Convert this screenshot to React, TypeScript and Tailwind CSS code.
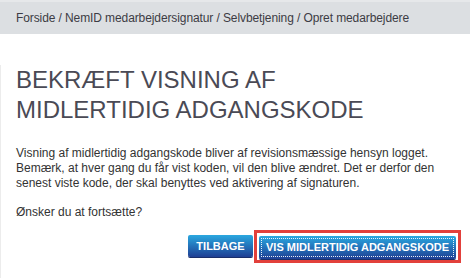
import React from "react";

export default function App() {
  return (
    <div className="w-[470px] h-[278px] bg-white overflow-hidden font-['Liberation_Sans',Arial,sans-serif]">
      <div className="h-[34px] bg-[#dcdfe2] border-t-2 border-[#e6e8ea] flex items-center pl-4 text-[12px] tracking-[-0.1px] text-[#3c3c44]">
        Forside / NemID medarbejdersignatur / Selvbetjening / Opret medarbejdere
      </div>
      <div className="border-l border-[#ececec] h-[244px] pl-[15px] pr-[9px]">
        <h1 className="mt-[31px] text-[24px] leading-[30px] text-[#4a4a55] font-normal">
          BEKRÆFT VISNING AF
          <br />
          MIDLERTIDIG ADGANGSKODE
        </h1>
        <p className="mt-[21px] text-[12px] leading-[15px] text-[#333] pr-[10px]">
          Visning af midlertidig adgangskode bliver af revisionsmæssige hensyn logget. Bemærk, at hver gang du får vist koden, vil den blive ændret. Det er derfor den senest viste kode, der skal benyttes ved aktivering af signaturen.
        </p>
        <p className="mt-[14px] text-[12px] leading-[15px] text-[#333]">Ønsker du at fortsætte?</p>
        <div className="mt-[10px] flex justify-end items-center gap-px">
          <button className="w-[65px] h-[22px] rounded-[2px] bg-linear-to-b from-[#2aa8e0] to-[#1f3f94] text-white font-bold text-[11px] shadow-[0_1px_0_#1a2f6a]">
            TILBAGE
          </button>
          <div className="border-[3px] border-[#e2403b] px-[2px] py-px">
            <button className="relative w-[197px] h-[23px] rounded-[2px] bg-linear-to-b from-[#2aa8e0] to-[#1f3f94] text-white font-bold text-[11px] shadow-[0_1px_0_#1a2f6a]">
              <span className="absolute inset-[2px] border border-dotted border-white/90"></span>
              VIS MIDLERTIDIG ADGANGSKODE
            </button>
          </div>
        </div>
      </div>
    </div>
  );
}
